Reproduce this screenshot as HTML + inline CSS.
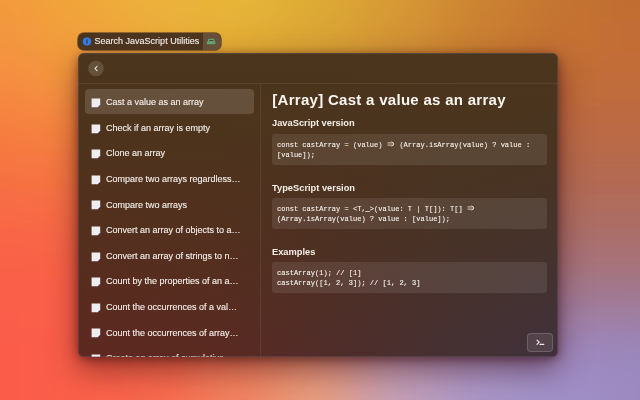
<!DOCTYPE html>
<html><head><meta charset="utf-8">
<style>
html,body{margin:0;padding:0;}
body{width:640px;height:400px;overflow:hidden;position:relative;font-family:"Liberation Sans",sans-serif;background:#e0904a;}
.bg{position:absolute;left:0;top:0;width:640px;height:400px;}
.a{position:absolute;white-space:nowrap;}
.shadow{left:78px;top:53px;width:480px;height:304px;border-radius:8px;box-shadow:0 12px 30px 0 rgba(50,5,10,0.5), 0 2px 10px rgba(40,5,10,0.45);}
.badge{left:78px;top:33px;width:143px;height:16.5px;border-radius:6px;background:#4b3520;box-shadow:0 0 0 0.8px rgba(70,45,25,0.7);overflow:hidden;will-change:transform;}
.badge .txt{position:absolute;left:16.6px;top:4.3px;font-size:9px;line-height:9px;color:#f2ece6;-webkit-text-stroke:0.12px #f2ece6;}
.badge .rs{position:absolute;left:125px;top:0;width:18px;height:16.5px;background:#66503a;}
.badge svg{position:absolute;left:0;top:0;}
.win{left:78px;top:53px;width:480px;height:304px;border-radius:6px;overflow:hidden;will-change:transform;
background:linear-gradient(180deg,rgba(75,53,28,1) 0%,rgba(75,53,28,0.85) 30%,rgba(75,53,28,0.5) 62%,rgba(75,53,28,0.15) 88%,rgba(75,53,28,0) 100%),
linear-gradient(90deg,#5e2820 0%,#5a2a22 30%,#4c2d2c 60%,#443034 80%,#40303c 100%);}
.border{position:absolute;left:0;top:0;width:478px;height:302px;border-radius:6px;border:1px solid rgba(110,95,105,0.4);}
.sep{position:absolute;left:0;top:30px;width:480px;height:1px;background:rgba(255,255,255,0.07);}
.vdiv{position:absolute;left:182px;top:31px;width:1px;height:280px;background:rgba(255,255,255,0.07);}
.item{position:absolute;left:7px;width:169px;height:25px;border-radius:4px;}
.item.sel{background:rgba(255,255,255,0.14);}
.item svg{position:absolute;left:6.2px;top:9px;}
.item .tx{position:absolute;left:21px;top:9.2px;font-size:9px;line-height:9px;color:#f4efea;-webkit-text-stroke:0.12px #f4efea;}
.h1{position:absolute;left:194.3px;font-size:15px;line-height:15px;font-weight:bold;color:#fbf6f0;letter-spacing:0.29px;}
.h3{position:absolute;left:194px;font-size:9.3px;line-height:9px;font-weight:bold;color:#f5efe8;}
.code{position:absolute;left:193.5px;width:275.5px;height:31px;border-radius:3px;background:rgba(255,255,255,0.09);}
.code .ln{position:absolute;left:5px;font-family:"Liberation Mono",monospace;font-size:8px;line-height:8px;color:#f8f4f0;transform:scaleX(0.879);transform-origin:0 0;-webkit-text-stroke:0.1px #f8f4f0;}
.arr{display:inline-block;width:9.6px;height:8px;vertical-align:top;position:relative;}
.arr svg{position:absolute;left:0;top:0;}
.btn{position:absolute;left:449px;top:280px;width:26px;height:19px;border-radius:4px;background:rgba(255,255,255,0.09);box-shadow:inset 0 0 0 1px rgba(255,255,255,0.16);}
.btn svg{position:absolute;left:0;top:0;}
</style></head>
<body>
<svg class="bg" width="640" height="400" viewBox="0 0 640 400"><defs><filter id="bl" x="-20%" y="-20%" width="140%" height="140%"><feGaussianBlur stdDeviation="28"/></filter></defs><g filter="url(#bl)"><rect x="-80" y="-75" width="120" height="100" fill="#f39a3c"/><rect x="40" y="-75" width="80" height="100" fill="#f0a83a"/><rect x="120" y="-75" width="80" height="100" fill="#ecb43a"/><rect x="200" y="-75" width="80" height="100" fill="#e8b838"/><rect x="280" y="-75" width="80" height="100" fill="#deac36"/><rect x="360" y="-75" width="80" height="100" fill="#d89a34"/><rect x="440" y="-75" width="80" height="100" fill="#cc8432"/><rect x="520" y="-75" width="80" height="100" fill="#c47430"/><rect x="600" y="-75" width="120" height="100" fill="#c06c30"/><rect x="-80" y="25" width="120" height="50" fill="#f49440"/><rect x="40" y="25" width="80" height="50" fill="#f09c3c"/><rect x="120" y="25" width="80" height="50" fill="#e8a838"/><rect x="200" y="25" width="80" height="50" fill="#e0a836"/><rect x="280" y="25" width="80" height="50" fill="#d8a034"/><rect x="360" y="25" width="80" height="50" fill="#d09034"/><rect x="440" y="25" width="80" height="50" fill="#c87c32"/><rect x="520" y="25" width="80" height="50" fill="#c47030"/><rect x="600" y="25" width="120" height="50" fill="#c46e34"/><rect x="-80" y="75" width="120" height="50" fill="#f68640"/><rect x="40" y="75" width="80" height="50" fill="#f49040"/><rect x="120" y="75" width="80" height="50" fill="#e89838"/><rect x="200" y="75" width="80" height="50" fill="#dc9c36"/><rect x="280" y="75" width="80" height="50" fill="#d09434"/><rect x="360" y="75" width="80" height="50" fill="#c88434"/><rect x="440" y="75" width="80" height="50" fill="#c47436"/><rect x="520" y="75" width="80" height="50" fill="#c06a3c"/><rect x="600" y="75" width="120" height="50" fill="#c06a3c"/><rect x="-80" y="125" width="120" height="50" fill="#f67840"/><rect x="40" y="125" width="80" height="50" fill="#f47c40"/><rect x="120" y="125" width="80" height="50" fill="#e88440"/><rect x="200" y="125" width="80" height="50" fill="#d88a40"/><rect x="280" y="125" width="80" height="50" fill="#c8843c"/><rect x="360" y="125" width="80" height="50" fill="#c07840"/><rect x="440" y="125" width="80" height="50" fill="#bc6e44"/><rect x="520" y="125" width="80" height="50" fill="#b86a48"/><rect x="600" y="125" width="120" height="50" fill="#b86a48"/><rect x="-80" y="175" width="120" height="50" fill="#f76c44"/><rect x="40" y="175" width="80" height="50" fill="#f56e44"/><rect x="120" y="175" width="80" height="50" fill="#e87648"/><rect x="200" y="175" width="80" height="50" fill="#d87c4c"/><rect x="280" y="175" width="80" height="50" fill="#c87c50"/><rect x="360" y="175" width="80" height="50" fill="#b87658"/><rect x="440" y="175" width="80" height="50" fill="#b06e5c"/><rect x="520" y="175" width="80" height="50" fill="#b06a58"/><rect x="600" y="175" width="120" height="50" fill="#b06a58"/><rect x="-80" y="225" width="120" height="50" fill="#fa6246"/><rect x="40" y="225" width="80" height="50" fill="#f86446"/><rect x="120" y="225" width="80" height="50" fill="#ea6e50"/><rect x="200" y="225" width="80" height="50" fill="#e07658"/><rect x="280" y="225" width="80" height="50" fill="#c8805c"/><rect x="360" y="225" width="80" height="50" fill="#b07870"/><rect x="440" y="225" width="80" height="50" fill="#a87478"/><rect x="520" y="225" width="80" height="50" fill="#a87070"/><rect x="600" y="225" width="120" height="50" fill="#a87070"/><rect x="-80" y="275" width="120" height="50" fill="#fa5e48"/><rect x="40" y="275" width="80" height="50" fill="#fa5e48"/><rect x="120" y="275" width="80" height="50" fill="#f06a54"/><rect x="200" y="275" width="80" height="50" fill="#e87a5c"/><rect x="280" y="275" width="80" height="50" fill="#d08870"/><rect x="360" y="275" width="80" height="50" fill="#b08090"/><rect x="440" y="275" width="80" height="50" fill="#a07898"/><rect x="520" y="275" width="80" height="50" fill="#a07890"/><rect x="600" y="275" width="120" height="50" fill="#a07890"/><rect x="-80" y="325" width="120" height="50" fill="#fa5c4a"/><rect x="40" y="325" width="80" height="50" fill="#fa5e4a"/><rect x="120" y="325" width="80" height="50" fill="#f8644c"/><rect x="200" y="325" width="80" height="50" fill="#f27a58"/><rect x="280" y="325" width="80" height="50" fill="#e09078"/><rect x="360" y="325" width="80" height="50" fill="#b898b0"/><rect x="440" y="325" width="80" height="50" fill="#a890c0"/><rect x="520" y="325" width="80" height="50" fill="#9c88c0"/><rect x="600" y="325" width="120" height="50" fill="#9a88c0"/><rect x="-80" y="375" width="120" height="100" fill="#fa5c4a"/><rect x="40" y="375" width="80" height="100" fill="#fa5e4a"/><rect x="120" y="375" width="80" height="100" fill="#f66a4e"/><rect x="200" y="375" width="80" height="100" fill="#f08462"/><rect x="280" y="375" width="80" height="100" fill="#e8a080"/><rect x="360" y="375" width="80" height="100" fill="#c4a0b8"/><rect x="440" y="375" width="80" height="100" fill="#a898c8"/><rect x="520" y="375" width="80" height="100" fill="#a090c8"/><rect x="600" y="375" width="120" height="100" fill="#9c8ac0"/></g></svg>
<div class="a shadow"></div>
<div class="a badge">
  <div class="rs"></div>
  <svg width="143" height="17" viewBox="0 0 143 17">
    <circle cx="9" cy="8.5" r="4.1" fill="#2a80f5"/>
    <rect x="8.2" y="6.3" width="1.5" height="4.5" rx="0.5" fill="#5a3a30"/>
    <rect x="130" y="5.8" width="6.4" height="3.2" rx="1.3" fill="#5fa372"/>
    <rect x="131.3" y="7.0" width="3.8" height="1.3" fill="#5a3e2c"/>
    <rect x="128.8" y="8.2" width="8.6" height="3.1" rx="0.9" fill="#5fa372"/>
  </svg>
  <div class="txt">Search JavaScript Utilities</div>
</div>

<div class="a win">
  <svg style="position:absolute;left:0;top:0" width="40" height="31" viewBox="0 0 40 31">
    <circle cx="18" cy="15.5" r="7.8" fill="rgba(255,255,255,0.14)"/>
    <path d="M19.1 13.3 L16.9 15.5 L19.1 17.7" fill="none" stroke="#f2ece6" stroke-width="1.05" stroke-linecap="round" stroke-linejoin="round"/>
  </svg>
  <div class="sep"></div>
  <div class="vdiv"></div>
  <div class="item sel" style="top:36.0px"><svg width="10" height="10" viewBox="0 0 10 10"><path d="M0.6 0.6 L9.2 0.6 L9.2 6.9 L6.9 9.2 L0.6 9.2 Z" fill="#eeedf1"/><path d="M6.8 9.2 L9.2 6.8" stroke="#8f7cc0" stroke-width="1"/></svg><div class="tx">Cast a value as an array</div></div>
  <div class="item" style="top:61.6px"><svg width="10" height="10" viewBox="0 0 10 10"><path d="M0.6 0.6 L9.2 0.6 L9.2 6.9 L6.9 9.2 L0.6 9.2 Z" fill="#eeedf1"/><path d="M6.8 9.2 L9.2 6.8" stroke="#8f7cc0" stroke-width="1"/></svg><div class="tx">Check if an array is empty</div></div>
  <div class="item" style="top:87.2px"><svg width="10" height="10" viewBox="0 0 10 10"><path d="M0.6 0.6 L9.2 0.6 L9.2 6.9 L6.9 9.2 L0.6 9.2 Z" fill="#eeedf1"/><path d="M6.8 9.2 L9.2 6.8" stroke="#8f7cc0" stroke-width="1"/></svg><div class="tx">Clone an array</div></div>
  <div class="item" style="top:112.8px"><svg width="10" height="10" viewBox="0 0 10 10"><path d="M0.6 0.6 L9.2 0.6 L9.2 6.9 L6.9 9.2 L0.6 9.2 Z" fill="#eeedf1"/><path d="M6.8 9.2 L9.2 6.8" stroke="#8f7cc0" stroke-width="1"/></svg><div class="tx">Compare two arrays regardless…</div></div>
  <div class="item" style="top:138.4px"><svg width="10" height="10" viewBox="0 0 10 10"><path d="M0.6 0.6 L9.2 0.6 L9.2 6.9 L6.9 9.2 L0.6 9.2 Z" fill="#eeedf1"/><path d="M6.8 9.2 L9.2 6.8" stroke="#8f7cc0" stroke-width="1"/></svg><div class="tx">Compare two arrays</div></div>
  <div class="item" style="top:164.0px"><svg width="10" height="10" viewBox="0 0 10 10"><path d="M0.6 0.6 L9.2 0.6 L9.2 6.9 L6.9 9.2 L0.6 9.2 Z" fill="#eeedf1"/><path d="M6.8 9.2 L9.2 6.8" stroke="#8f7cc0" stroke-width="1"/></svg><div class="tx">Convert an array of objects to a…</div></div>
  <div class="item" style="top:189.6px"><svg width="10" height="10" viewBox="0 0 10 10"><path d="M0.6 0.6 L9.2 0.6 L9.2 6.9 L6.9 9.2 L0.6 9.2 Z" fill="#eeedf1"/><path d="M6.8 9.2 L9.2 6.8" stroke="#8f7cc0" stroke-width="1"/></svg><div class="tx">Convert an array of strings to n…</div></div>
  <div class="item" style="top:215.2px"><svg width="10" height="10" viewBox="0 0 10 10"><path d="M0.6 0.6 L9.2 0.6 L9.2 6.9 L6.9 9.2 L0.6 9.2 Z" fill="#eeedf1"/><path d="M6.8 9.2 L9.2 6.8" stroke="#8f7cc0" stroke-width="1"/></svg><div class="tx">Count by the properties of an a…</div></div>
  <div class="item" style="top:240.8px"><svg width="10" height="10" viewBox="0 0 10 10"><path d="M0.6 0.6 L9.2 0.6 L9.2 6.9 L6.9 9.2 L0.6 9.2 Z" fill="#eeedf1"/><path d="M6.8 9.2 L9.2 6.8" stroke="#8f7cc0" stroke-width="1"/></svg><div class="tx">Count the occurrences of a val…</div></div>
  <div class="item" style="top:266.4px"><svg width="10" height="10" viewBox="0 0 10 10"><path d="M0.6 0.6 L9.2 0.6 L9.2 6.9 L6.9 9.2 L0.6 9.2 Z" fill="#eeedf1"/><path d="M6.8 9.2 L9.2 6.8" stroke="#8f7cc0" stroke-width="1"/></svg><div class="tx">Count the occurrences of array…</div></div>
  <div class="item" style="top:292.0px"><svg width="10" height="10" viewBox="0 0 10 10"><path d="M0.6 0.6 L9.2 0.6 L9.2 6.9 L6.9 9.2 L0.6 9.2 Z" fill="#eeedf1"/><path d="M6.8 9.2 L9.2 6.8" stroke="#8f7cc0" stroke-width="1"/></svg><div class="tx">Create an array of cumulative…</div></div>

  <div class="h1" style="top:38.6px">[Array] Cast a value as an array</div>
  <div class="h3" style="top:65.5px">JavaScript version</div>
  <div class="code" style="top:81px">
    <div class="ln" style="top:6.8px">const castArray = (value) <span class="arr"><svg width="10" height="8" viewBox="0 0 10 8"><path d="M1.2 1.9 L7.2 1.9 M1.2 4.1 L7.2 4.1 M5.6 0.8 L8.1 3 L5.6 5.2" fill="none" stroke="#f2ece6" stroke-width="0.85" stroke-linecap="round" stroke-linejoin="round"/></svg></span> (Array.isArray(value) ? value :</div>
    <div class="ln" style="top:17px">[value]);</div>
  </div>
  <div class="h3" style="top:130.5px">TypeScript version</div>
  <div class="code" style="top:145px">
    <div class="ln" style="top:6.8px">const castArray = &lt;T,_&gt;(value: T | T[]): T[] <span class="arr"><svg width="10" height="8" viewBox="0 0 10 8"><path d="M1.2 1.9 L7.2 1.9 M1.2 4.1 L7.2 4.1 M5.6 0.8 L8.1 3 L5.6 5.2" fill="none" stroke="#f2ece6" stroke-width="0.85" stroke-linecap="round" stroke-linejoin="round"/></svg></span></div>
    <div class="ln" style="top:17px">(Array.isArray(value) ? value : [value]);</div>
  </div>
  <div class="h3" style="top:194.5px">Examples</div>
  <div class="code" style="top:209px">
    <div class="ln" style="top:6.8px">castArray(1); // [1]</div>
    <div class="ln" style="top:17px">castArray([1, 2, 3]); // [1, 2, 3]</div>
  </div>

  <div class="btn"><svg width="26" height="19" viewBox="0 0 26 19">
    <path d="M10 7.1 L12.2 9.1 L10 11.3" fill="none" stroke="#f2ece6" stroke-width="1.2" stroke-linecap="round" stroke-linejoin="round"/>
    <path d="M13 11.4 L16.8 11.4" fill="none" stroke="#f2ece6" stroke-width="1.1" stroke-linecap="round"/>
  </svg></div>
  <div class="border"></div>
</div>
</body></html>
